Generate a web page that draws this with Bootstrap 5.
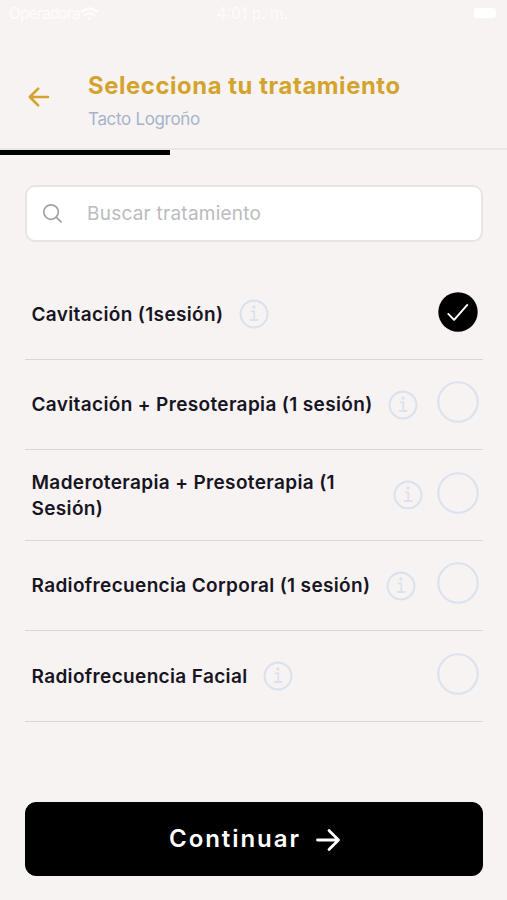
<!DOCTYPE html>
<html lang="es">
<head>
<meta charset="utf-8">
<meta name="viewport" content="width=device-width, initial-scale=1">
<title>Selecciona tu tratamiento</title>
<link rel="stylesheet" href="https://cdn.jsdelivr.net/npm/bootstrap@5.3.0/dist/css/bootstrap.min.css">
<style>
body{background:#f7f3f2;font-family:Inter,"Liberation Sans",sans-serif;height:900px;overflow:hidden;color:#171523}
.status{height:28px;color:#fefcfb;font-size:15.5px;line-height:28px;padding:0 11px 0 9px}
.status>*{flex:1 1 0}
.status span:first-child{letter-spacing:-.8px}
.battery{width:22px;height:10px;border-radius:3px;background:#fff;margin-bottom:2px}
.topbar{height:122px;padding:42px 27px 0;border-bottom:2px solid #e9e6e5}
.back{width:24px;height:24px;margin-top:15px;margin-right:37px;color:#d4a32d}
.title{font-size:23.8px;font-weight:700;line-height:32px;color:#d4a32d;letter-spacing:.6px;white-space:nowrap}
.place{font-size:17px;line-height:22px;color:#a6b3ca;margin-top:6px;letter-spacing:-.33px}
.steps{height:5px;border-radius:0;background:transparent;--bs-progress-bar-bg:#000}
.main{padding:30px 24.5px 0 25px}
.search{height:57px;border:2px solid #e7e4e3;border-radius:10px;background:#fff}
.search .input-group-text{padding:0 0 0 14.5px;width:61px;color:#a3a3a5}
.search .form-control{padding:1px 0 0;font-size:19px;color:#bbbbc0;letter-spacing:.24px}
.search .form-control::placeholder{color:#bbbbc0;opacity:1}
.treatments{margin-top:27px}
.treatment{height:90.5px;border-bottom:1.5px solid #d9d6d6;padding:0 3.5px 0 6.5px}
.name{font-size:19px;font-weight:600;line-height:25.5px;letter-spacing:.35px;padding-top:1.5px}
.info{width:30px;height:30px;color:#dbe2ee;flex:none;margin-left:15.5px;margin-top:1px}
.info-wrapped{margin-right:14px}
.check{width:42px;height:42px;flex:none;margin-left:auto;margin-bottom:4px}
.go{margin:auto 24.5px 24px 25px;height:74px;border-radius:11px;--bs-btn-bg:#000;--bs-btn-color:#fff;--bs-btn-border-color:#000;font-size:24px;font-weight:600;letter-spacing:1.95px;padding:6px 12px 6px 15px}
.go svg{width:26px;height:26px;margin-left:14.5px;margin-top:2px}
</style>
<script src="https://cdn.jsdelivr.net/npm/bootstrap@5.3.0/dist/js/bootstrap.bundle.min.js" defer></script>
</head>
<body class="d-flex flex-column">
<svg class="d-none" xmlns="http://www.w3.org/2000/svg">
  <symbol id="i-info" viewBox="0 0 30 30"><g fill="none" stroke="currentColor"><circle cx="15" cy="15" r="13.4" stroke-width="2.1"/><path d="M11.8 12.4h3.5v8.6M11 21h8.2" stroke-width="1.8"/></g><circle cx="15" cy="8" r="1.7" fill="currentColor"/></symbol>
  <symbol id="i-empty" viewBox="0 0 42 42"><circle cx="21" cy="21" r="19.7" fill="none" stroke="#dbe2ee" stroke-width="2.1"/></symbol>
  <symbol id="i-done" viewBox="0 0 42 42"><circle cx="21" cy="21" r="19.7"/><path d="M11.3 22.9l5.8 6 13.2-15" fill="none" stroke="#fff" stroke-width="1.9" stroke-linecap="round" stroke-linejoin="round"/></symbol>
</svg>
<div class="status d-flex align-items-center flex-shrink-0">
  <div class="d-flex align-items-center"><span>Operadora</span><svg width="19" height="14" viewBox="0 0 19 14" fill="none" stroke="currentColor" stroke-width="2.4"><path d="M1 5q8.500-7 17 0M4 8.500q5.500-4.500 11 0"/><path d="M7 11l2.500 2.500L12 11q-2.500-2-5 0z" fill="currentColor" stroke="none"/></svg></div>
  <div class="text-center">4:01 p. m.</div>
  <div class="d-flex justify-content-end"><span class="battery"></span></div>
</div>
<header class="topbar d-flex flex-shrink-0">
  <svg class="back flex-shrink-0" viewBox="0 0 24 24" fill="none" stroke="currentColor" stroke-width="2.6" stroke-linecap="round" stroke-linejoin="round"><path d="M21 12H2.800M11.200 3.600L2.800 12l8.400 8.400"/></svg>
  <div><h1 class="title mb-0">Selecciona tu tratamiento</h1><div class="place">Tacto Logroño</div></div>
</header>
<div class="progress steps flex-shrink-0"><div class="progress-bar" style="width:33.5%"></div></div>
<main class="main">
  <div class="search input-group flex-nowrap overflow-hidden">
    <span class="input-group-text border-0 bg-transparent"><svg width="21" height="21" viewBox="0 0 22 22" fill="none" stroke="currentColor" stroke-width="1.8" stroke-linecap="round"><circle cx="9.500" cy="9.500" r="7.600"/><path d="M15 15l5 4.800"/></svg></span>
    <input class="form-control border-0 bg-transparent shadow-none" type="text" placeholder="Buscar tratamiento">
  </div>
  <div class="treatments">
    <div class="treatment d-flex align-items-center"><span class="name">Cavitación (1sesión)</span><svg class="info"><use href="#i-info"/></svg><svg class="check"><use href="#i-done"/></svg></div>
    <div class="treatment d-flex align-items-center"><span class="name">Cavitación + Presoterapia (1 sesión)</span><svg class="info"><use href="#i-info"/></svg><svg class="check"><use href="#i-empty"/></svg></div>
    <div class="treatment d-flex align-items-center"><span class="name flex-fill">Maderoterapia + Presoterapia (1<br>Sesión)</span><svg class="info info-wrapped"><use href="#i-info"/></svg><svg class="check"><use href="#i-empty"/></svg></div>
    <div class="treatment d-flex align-items-center"><span class="name">Radiofrecuencia Corporal (1 sesión)</span><svg class="info"><use href="#i-info"/></svg><svg class="check"><use href="#i-empty"/></svg></div>
    <div class="treatment d-flex align-items-center"><span class="name">Radiofrecuencia Facial</span><svg class="info"><use href="#i-info"/></svg><svg class="check"><use href="#i-empty"/></svg></div>
  </div>
</main>
<button type="button" class="go btn d-flex align-items-center justify-content-center flex-shrink-0">Continuar<svg viewBox="0 0 26 26" fill="none" stroke="currentColor" stroke-width="2.800" stroke-linecap="round" stroke-linejoin="round"><path d="M2.500 13h21M14 3.500l9.500 9.500-9.500 9.500"/></svg></button>
</body>
</html>
